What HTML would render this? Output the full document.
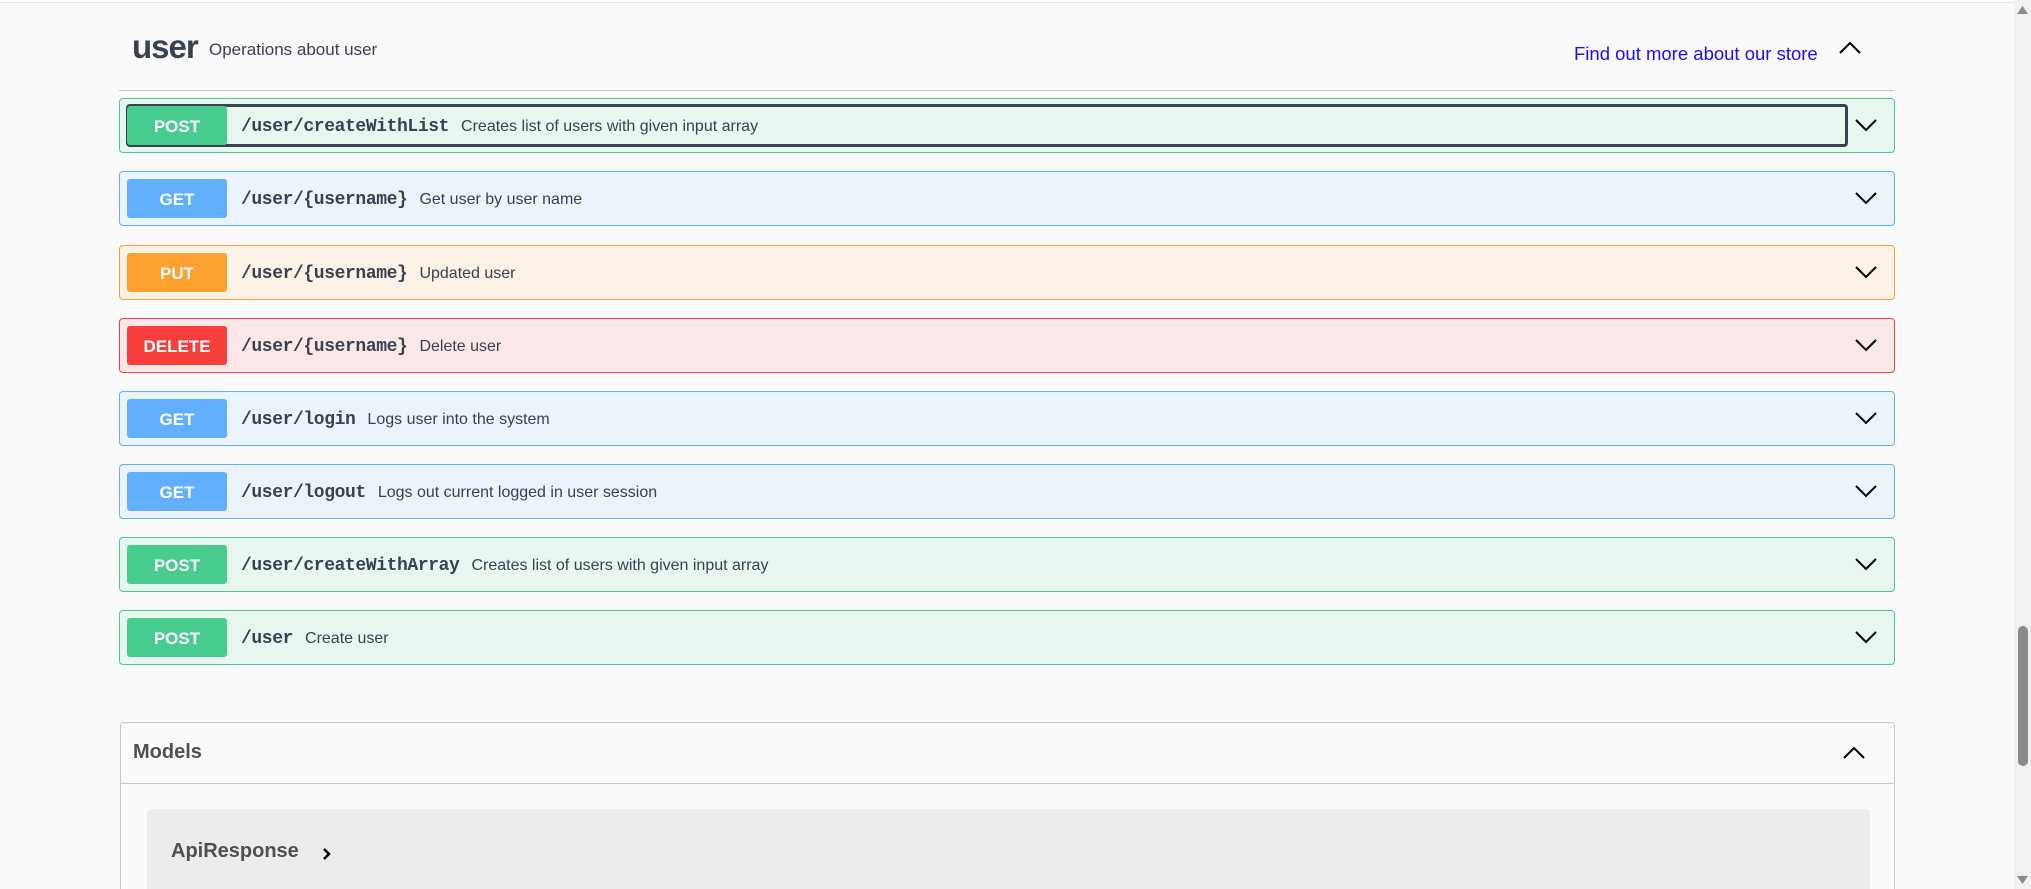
<!DOCTYPE html>
<html><head><meta charset="utf-8"><style>
*{box-sizing:border-box;margin:0;padding:0}
html,body{width:2031px;height:889px;overflow:hidden}
body{background:#fafafa;font-family:"Liberation Sans",sans-serif;position:relative;color:#3b4151}
.top{position:absolute;left:0;top:2px;width:2014px;height:1px;background:#e4e4e4}
.h{position:absolute;left:132px;top:28px;font-size:33px;font-weight:bold;color:#3b4151;letter-spacing:-1px}
.hd{position:absolute;left:209px;top:40px;font-size:17px;color:#3b4151}
.lnk{position:absolute;left:1574px;top:43px;font-size:18.5px;color:#1a0dff}
.div{position:absolute;left:119px;top:90px;width:1776px;height:1px;background:#c8c8c8}
.row{position:absolute;left:119px;width:1776px;height:55px;border:1px solid;border-radius:4px}
.b{position:absolute;left:7px;top:7px;width:100px;height:39px;border-radius:3px;color:#fff;font-weight:bold;font-size:17px;text-align:center;line-height:41px}
.p{position:absolute;left:121px;top:18px;font-family:"Liberation Mono",monospace;font-weight:bold;font-size:18px;color:#3b4151;letter-spacing:-0.4px}
.d{font-family:"Liberation Sans",sans-serif;font-weight:normal;font-size:16px;margin-left:12px;letter-spacing:0}
.chev{position:absolute;right:16px;top:18px}
.post{border-color:#49cc90;background:#e8f6f0}.post .b{background:#49cc90}
.get{border-color:#61affe;background:#ebf3fb}.get .b{background:#61affe}
.put{border-color:#fca130;background:#fbf1e6}.put .b{background:#fca130}
.del{border-color:#f93e3e;background:#fae7e7}.del .b{background:#f93e3e}
.focus{position:absolute;left:6px;top:5px;width:1722px;height:43px;border:3px solid #3b4151;border-radius:4px}
.models{position:absolute;left:120px;top:722px;width:1775px;height:167px;border:1px solid #c8c8c8;border-bottom:none;border-radius:4px 4px 0 0;overflow:hidden}
.mh{position:absolute;left:0;top:60px;width:100%;height:1px;background:#c8c8c8}
.mt{position:absolute;left:12px;top:18px;font-size:20px;font-weight:bold;color:#505050}
.inner{position:absolute;left:26px;top:86px;width:1723px;height:81px;background:#ececec;border-radius:4px 4px 0 0}
.it{position:absolute;left:24px;top:31px;font-size:20px;font-weight:bold;color:#505050}
.sb{position:absolute;left:2014px;top:0;width:17px;height:889px;background:#f1f1f1}
.th{position:absolute;left:4px;top:626px;width:10px;height:140px;background:#8a8a8a;border-radius:5px}
</style></head><body>
<div class="top"></div>
<div class="h">user</div>
<div class="hd">Operations about user</div>
<div class="lnk">Find out more about our store</div>
<svg style="position:absolute;left:1838px;top:40px" width="24" height="16" viewBox="0 0 24 16"><path d="M2 13 L12 3 L22 13" fill="none" stroke="#000" stroke-width="2"/></svg>
<div class="div"></div>

<div class="row post" style="top:98px"><div class="focus"></div><div class="b">POST</div><div class="p">/user/createWithList<span class="d">Creates list of users with given input array</span></div><svg class="chev" width="24" height="16"><path d="M2 3 L12 13 L22 3" fill="none" stroke="#000" stroke-width="2"/></svg></div>
<div class="row get" style="top:171px"><div class="b">GET</div><div class="p">/user/{username}<span class="d">Get user by user name</span></div><svg class="chev" width="24" height="16"><path d="M2 3 L12 13 L22 3" fill="none" stroke="#000" stroke-width="2"/></svg></div>
<div class="row put" style="top:245px"><div class="b">PUT</div><div class="p">/user/{username}<span class="d">Updated user</span></div><svg class="chev" width="24" height="16"><path d="M2 3 L12 13 L22 3" fill="none" stroke="#000" stroke-width="2"/></svg></div>
<div class="row del" style="top:318px"><div class="b">DELETE</div><div class="p">/user/{username}<span class="d">Delete user</span></div><svg class="chev" width="24" height="16"><path d="M2 3 L12 13 L22 3" fill="none" stroke="#000" stroke-width="2"/></svg></div>
<div class="row get" style="top:391px"><div class="b">GET</div><div class="p">/user/login<span class="d">Logs user into the system</span></div><svg class="chev" width="24" height="16"><path d="M2 3 L12 13 L22 3" fill="none" stroke="#000" stroke-width="2"/></svg></div>
<div class="row get" style="top:464px"><div class="b">GET</div><div class="p">/user/logout<span class="d">Logs out current logged in user session</span></div><svg class="chev" width="24" height="16"><path d="M2 3 L12 13 L22 3" fill="none" stroke="#000" stroke-width="2"/></svg></div>
<div class="row post" style="top:537px"><div class="b">POST</div><div class="p">/user/createWithArray<span class="d">Creates list of users with given input array</span></div><svg class="chev" width="24" height="16"><path d="M2 3 L12 13 L22 3" fill="none" stroke="#000" stroke-width="2"/></svg></div>
<div class="row post" style="top:610px"><div class="b">POST</div><div class="p">/user<span class="d">Create user</span></div><svg class="chev" width="24" height="16"><path d="M2 3 L12 13 L22 3" fill="none" stroke="#000" stroke-width="2"/></svg></div>

<div class="models"><div class="mt">Models</div>
<svg style="position:absolute;right:28px;top:22px" width="24" height="16"><path d="M2 13 L12 3 L22 13" fill="none" stroke="#000" stroke-width="2"/></svg>
<div class="mh"></div>
<div class="inner"><div class="it">ApiResponse</div><svg style="position:absolute;left:175px;top:38px" width="10" height="14"><path d="M2 2 L7 7 L2 12" fill="none" stroke="#000" stroke-width="2.5"/></svg></div>
</div>
<div class="sb"><svg style="position:absolute;left:3px;top:6px" width="11" height="8"><path d="M0 8 L5.5 0 L11 8Z" fill="#8a8a8a"/></svg><div class="th"></div><svg style="position:absolute;left:3px;top:876px" width="11" height="8"><path d="M0 0 L5.5 8 L11 0Z" fill="#8a8a8a"/></svg></div>
</body></html>
